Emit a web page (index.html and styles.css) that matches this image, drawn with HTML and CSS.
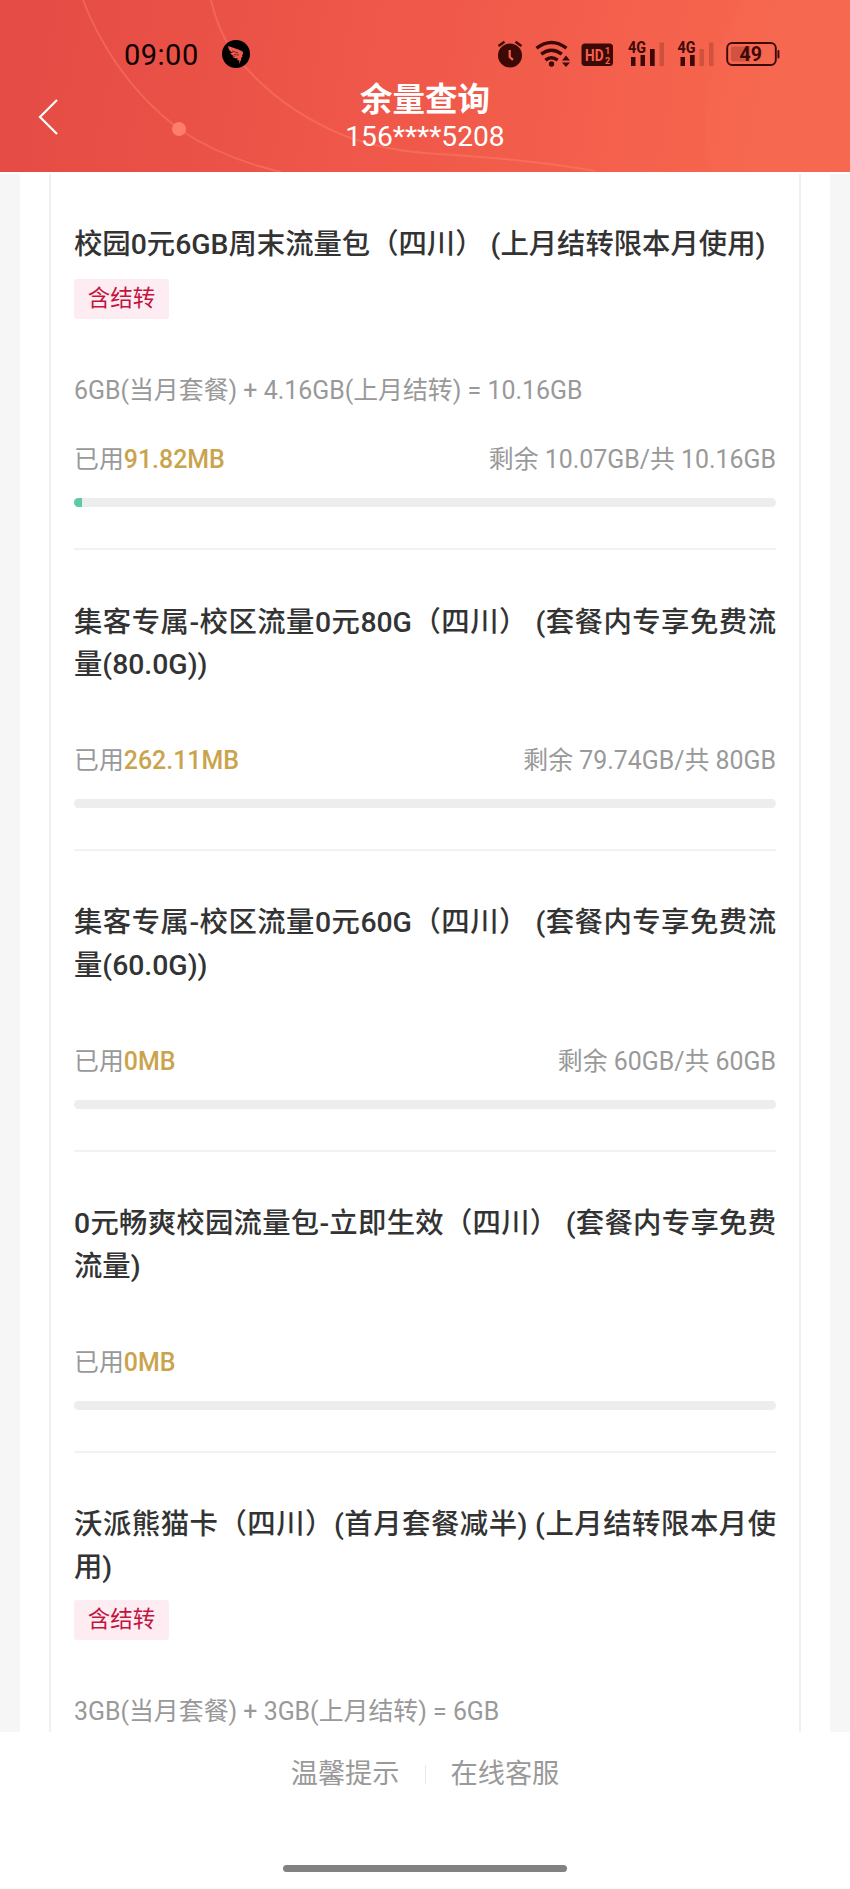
FILE: index.html
```html
<!DOCTYPE html>
<html lang="zh-CN">
<head>
<meta charset="utf-8">
<title>余量查询</title>
<link rel="stylesheet" href="styles.css">
</head>
<body>
<header class="header">
  <svg class="header-art" width="850" height="172" viewBox="0 0 850 172" fill="none" stroke="#ff8a72" stroke-opacity=".38" stroke-width="2">
    <circle cx="950" cy="130" r="244" fill="#fff" fill-opacity=".015" stroke="none"/>
    <path d="M83 0C98 39 127 90 179 129C210 150 242 163 281 172"/>
    <path d="M211 0C217 25 229 53 250 72C274 98 304 119 345 136C372 146 397 151 425 153C485 157 540 161 595 171"/>
    <circle cx="179" cy="129" r="7" fill="#ff7d6b" stroke="none"/>
  </svg>
  <div class="status">
    <div class="status-left">
      <span class="time">09:00</span>
      <svg width="28" height="28" viewBox="0 0 28 28"><circle cx="14" cy="14" r="14"/><path fill="#ee5a4d" d="M6.3 6C11 8.200 16 8.500 20.500 11.500C21.700 12.800 20.800 14.500 20 16L20.700 16.200L18.800 18.500L19.600 18.700L17 24L17.300 20.300L15 20.200L16 18.500C12.500 18.700 11 17.500 10.500 16.500L13.500 16.300C10 15.800 8.500 14 8.300 12.800L11.500 13C8 11.500 6 9.500 6.300 6Z"/><path d="M10 11L16 13M12 14.500L17 15" stroke="#000" stroke-width=".5"/></svg>
    </div>
    <svg class="status-icons" width="300" height="30" viewBox="490 39 300 30">
      <circle cx="510" cy="55.500" r="12"/>
      <path class="line" stroke-width="2.400" d="M498.500 46L504.500 41.700M515.500 41.700L521.500 46"/>
      <path stroke="#f7604d" stroke-width="2.200" fill="none" d="M509.700 50V57L513 59.800"/>
      <g class="line" stroke-width="3.400">
        <path d="M536.500 48.200Q551.500 36.800 566.500 48.200"/>
        <path d="M541.200 54.200Q551.500 46.300 561.800 54.200"/>
        <path d="M545.400 60.200Q551.500 55.300 557.600 60.200"/>
      </g>
      <circle cx="551.500" cy="64" r="2.700"/>
      <path d="M562 60.500L566 55.500L570 60.500ZM562 62.500H570L566 67Z"/>
      <rect x="581.500" y="43.500" width="31.500" height="22.500" rx="3.500"/>
      <text class="cut" x="585" y="61" font-size="17" textLength="18.500" lengthAdjust="spacingAndGlyphs">HD</text>
      <text class="cut" x="605" y="53.500" font-size="9">1</text>
      <text class="cut" x="605" y="64" font-size="9">2</text>
      <text class="net" x="628" y="52.500" textLength="18" lengthAdjust="spacingAndGlyphs">4G</text>
      <path d="M631 57h4.500v9H631zM640.500 55h4.500v11h-4.500zM650 49h4.700v17H650z"/>
      <path opacity=".2" d="M659.500 42.500h4.500V66h-4.500z"/>
      <text class="net" x="677.500" y="52.500" textLength="18" lengthAdjust="spacingAndGlyphs">4G</text>
      <path d="M680.500 57h4.500v9h-4.500zM690 55h4.700v11H690z"/>
      <path opacity=".2" d="M699.500 49h4.500v17h-4.500zM709 42.500h4.500V66H709z"/>
      <rect x="727.200" y="43" width="48.600" height="22" rx="5" fill="none" stroke="#3c0907" stroke-width="1.900"/>
      <path opacity=".2" d="M733 46.500H750V61.500H733Q731 61.500 731 59.500V48.500Q731 46.500 733 46.500Z"/>
      <rect x="777.500" y="50" width="1.900" height="8.500" rx=".9"/>
      <text x="739.500" y="61" font-size="19.500" font-weight="700" textLength="22.500">49</text>
    </svg>
  </div>
  <div class="nav">
    <svg class="back" width="24" height="40" viewBox="0 0 24 40" fill="none" stroke="#fff" stroke-width="2.200"><path d="M20 3L3 20L20 37"/></svg>
    <div class="heading">
      <h1 class="page-title">余量查询</h1>
      <div class="phone">156****5208</div>
    </div>
  </div>
</header>
<main class="page">
  <div class="panel">
    <div class="card">
      <section class="item first">
        <h2 class="name">校园0元6GB周末流量包（四川） (上月结转限本月使用)</h2>
        <span class="tag">含结转</span>
        <p class="formula">6GB(当月套餐) + 4.16GB(上月结转) = 10.16GB</p>
        <div class="usage"><span>已用<b>91.82MB</b></span><span>剩余 10.07GB/共 10.16GB</span></div>
        <div class="bar"><div class="fill"></div></div>
      </section>
      <section class="item">
        <h2 class="name">集客专属-校区流量0元80G（四川） (套餐内专享免费流量(80.0G))</h2>
        <div class="usage"><span>已用<b>262.11MB</b></span><span>剩余 79.74GB/共 80GB</span></div>
        <div class="bar"></div>
      </section>
      <section class="item">
        <h2 class="name">集客专属-校区流量0元60G（四川） (套餐内专享免费流量(60.0G))</h2>
        <div class="usage"><span>已用<b>0MB</b></span><span>剩余 60GB/共 60GB</span></div>
        <div class="bar"></div>
      </section>
      <section class="item">
        <h2 class="name">0元畅爽校园流量包-立即生效（四川） (套餐内专享免费流量)</h2>
        <div class="usage"><span>已用<b>0MB</b></span></div>
        <div class="bar"></div>
      </section>
      <section class="item">
        <h2 class="name">沃派熊猫卡（四川）(首月套餐减半) (上月结转限本月使用)</h2>
        <span class="tag">含结转</span>
        <p class="formula">3GB(当月套餐) + 3GB(上月结转) = 6GB</p>
      </section>
    </div>
  </div>
</main>
<footer class="footer">
  <div class="links"><span>温馨提示</span><i class="sep"></i><span>在线客服</span></div>
  <div class="home-bar"></div>
</footer>
</body>
</html>
```
FILE: styles.css
```css
* { box-sizing: border-box; }
body {
  margin: 0;
  width: 850px;
  height: 1889px;
  overflow: hidden;
  display: flex;
  flex-direction: column;
  background: #fff;
  font-family: Roboto, "Noto Sans CJK SC", sans-serif;
  text-spacing-trim: space-all;
}
h1, h2, p { margin: 0; }
.header {
  position: relative;
  flex: none;
  height: 172px;
  background: linear-gradient(100deg, #e54c45 5%, #f0594a 50%, #f7664e 90%);
}
.header-art { position: absolute; top: 0; left: 0; }
.status {
  position: relative;
  display: flex;
  justify-content: space-between;
  align-items: center;
  height: 78px;
  padding: 30px 60px 0 124px;
}
.status-left { display: flex; align-items: center; gap: 23px; }
.time { padding-top: 1px; font-size: 29px; line-height: 30px; letter-spacing: .5px; color: #0c0000; }
.status-icons { fill: #3c0907; }
.line { fill: none; stroke: #3c0907; }
.cut { fill: #f7604d; font-weight: 700; }
.net { font-size: 16px; font-weight: 700; }
.nav {
  position: relative;
  display: grid;
  grid-template-columns: 100px 1fr 100px;
  color: #fff;
}
.back { margin: 19px 0 0 37px; }
.heading { padding-top: 1px; text-align: center; }
.page-title { font-size: 32.500px; line-height: 42px; font-weight: 700; }
.phone { font-size: 28.200px; line-height: 31px; }
.page {
  flex: none;
  height: 1560px;
  overflow: hidden;
  padding: 0 20px;
  background: #f6f6f6;
  border-top: 2px solid #fff;
}
.panel { height: 100%; padding: 0 29px; background: #fff; }
.card { border: 2px solid #f0f0f0; border-width: 0 2px; padding: 0 23px; height: 100%; }
.item {
  padding: 51.500px 0 41px;
  border-bottom: 2px solid #f2f2f2;
}
.name {
  font-size: 28.350px;
  line-height: 42.300px;
  font-weight: 500;
  color: #333;
  text-align: justify;
}
.tag {
  display: block;
  width: 95px;
  height: 40px;
  margin-top: 10.500px;
  border-radius: 3px;
  background: #fdecf1;
  color: #c3123f;
  font-size: 22.500px;
  line-height: 38.500px;
  text-align: center;
}
.formula { margin-top: 55px; font-size: 24.900px; line-height: 34px; color: #999; white-space: nowrap; }
.usage {
  display: flex;
  justify-content: space-between;
  margin-top: 57.900px;
  font-size: 24.900px;
  line-height: 34px;
  color: #999;
}
.usage b { font-weight: 500; color: #c9a44c; }
.bar {
  height: 9px;
  margin-top: 21px;
  border-radius: 4.500px;
  background: #ededed;
  overflow: hidden;
}
.fill { width: 8px; height: 9px; background: #5ccba5; }
.first { height: 376px; padding-top: 50px; }
.first .tag { margin-top: 13px; }
.first .formula { margin-top: 55px; }
.first .usage { margin-top: 34.500px; }
.first .bar { margin-top: 21px; }
.footer {
  flex: 1;
  display: flex;
  flex-direction: column;
  align-items: center;
  background: #fff;
}
.links {
  display: flex;
  align-items: center;
  gap: 25px;
  margin-top: 22px;
  font-size: 27.200px;
  line-height: 40px;
  color: #999;
}
.sep { width: 1px; height: 19px; background: #e8e8e8; }
.home-bar { width: 284px; height: 7px; margin-top: 71px; border-radius: 4px; background: #828282; }
```
